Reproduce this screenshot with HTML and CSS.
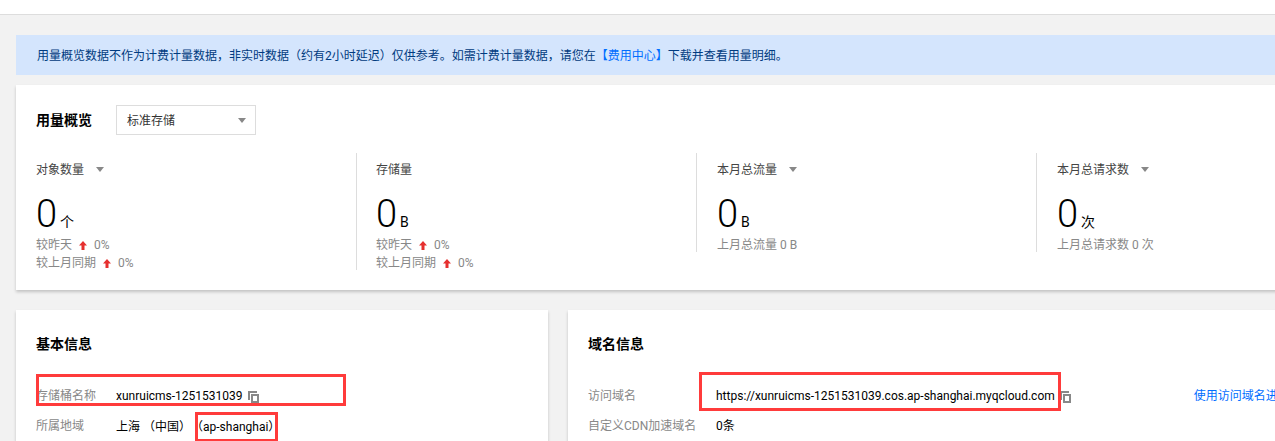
FILE: index.html
```html
<!DOCTYPE html>
<html lang="zh-CN">
<head>
<meta charset="utf-8">
<title>用量概览</title>
<link rel="stylesheet" href="styles.css">
</head>
<body>
<svg class="defs" width="0" height="0" aria-hidden="true">
  <symbol id="up" viewBox="0 0 8 9"><path d="M4 0 8 4.5H5.5V9H2.5V4.5H0Z" fill="#e6302f"/></symbol>
  <symbol id="copy" viewBox="0 0 11 12"><path d="M0 0H9V2H2V9H0Z" fill="#888"/><path fill-rule="evenodd" d="M3 3H11V12H3ZM5 5V10H9V5Z" fill="#888"/></symbol>
</svg>
<header class="topbar"></header>
<main class="content">
  <div class="notice">用量概览数据不作为计费计量数据，非实时数据<span class="paren">（</span>约有2小时延迟<span class="paren">）</span>仅供参考。如需计费计量数据，请您在<a class="link" href="#">【费用中心】</a>下载并查看用量明细。</div>

  <section class="card usage">
    <div class="usage-head">
      <h2 class="title">用量概览</h2>
      <div class="select">标准存储<i class="caret"></i></div>
    </div>
    <div class="stats">
      <div class="stat">
        <div class="stat-label">对象数量<i class="caret small"></i></div>
        <div class="stat-value"><span class="num">0</span><span class="unit">个</span></div>
        <div class="stat-sub">较昨天<svg class="up"><use href="#up"/></svg>0%</div>
        <div class="stat-sub">较上月同期<svg class="up"><use href="#up"/></svg>0%</div>
      </div>
      <div class="stat">
        <div class="stat-label">存储量</div>
        <div class="stat-value"><span class="num">0</span><span class="unit">B</span></div>
        <div class="stat-sub">较昨天<svg class="up"><use href="#up"/></svg>0%</div>
        <div class="stat-sub">较上月同期<svg class="up"><use href="#up"/></svg>0%</div>
      </div>
      <div class="stat">
        <div class="stat-label">本月总流量<i class="caret small"></i></div>
        <div class="stat-value"><span class="num">0</span><span class="unit">B</span></div>
        <div class="stat-sub">上月总流量 0 B</div>
      </div>
      <div class="stat">
        <div class="stat-label">本月总请求数<i class="caret small"></i></div>
        <div class="stat-value"><span class="num">0</span><span class="unit">次</span></div>
        <div class="stat-sub">上月总请求数 0 次</div>
      </div>
    </div>
  </section>

  <div class="info-grid">
    <section class="card info basic">
      <h2 class="title">基本信息</h2>
      <div class="row">
        <span class="key">存储桶名称</span>
        <span class="val">xunruicms-1251531039<svg class="copy"><use href="#copy"/></svg></span>
        <span class="mark mark-name"></span>
      </div>
      <div class="row">
        <span class="key">所属地域</span>
        <span class="val">上海 <span class="paren">（</span>中国<span class="paren">）</span><span class="paren">（</span>ap-shanghai<span class="paren">）</span></span>
        <span class="mark mark-region"></span>
      </div>
    </section>
    <section class="card info domain">
      <h2 class="title">域名信息</h2>
      <div class="row">
        <span class="key">访问域名</span>
        <span class="val">https://xunruicms-1251531039.cos.ap-shanghai.myqcloud.com<svg class="copy"><use href="#copy"/></svg></span>
        <a class="link row-link" href="#">使用访问域名进行访问</a>
        <span class="mark mark-domain"></span>
      </div>
      <div class="row">
        <span class="key">自定义CDN加速域名</span>
        <span class="val">0条</span>
      </div>
    </section>
  </div>
</main>
</body>
</html>
```
FILE: styles.css
```css
* { box-sizing: border-box; }
html, body { margin: 0; height: 441px; overflow: hidden; }
body {
  background: #f2f2f2;
  font-family: Roboto, "Noto Sans CJK SC", sans-serif;
  font-size: 12px;
  color: #000;
}
.defs { position: absolute; }
.paren { display: inline-block; width: 12px; text-align: center; font-family: "Noto Sans CJK KR", sans-serif; }
.topbar { height: 15px; background: #fff; border-bottom: 1px solid #ddd; }
.content {
  width: 1400px;
  padding: 20px 0 0 16px;
  display: flex;
  flex-direction: column;
  gap: 10px;
}
.notice {
  height: 40px;
  line-height: 40px;
  padding-left: 21px;
  background: #d4e5fd;
  color: #003b80;
}
.link { color: #006eff; text-decoration: none; }
.card { background: #fff; box-shadow: 0 2px 3px rgba(0, 0, 0, .2); }
.title { margin: 0; font-size: 14px; font-weight: 700; line-height: 20px; }
.usage { height: 205px; padding: 20px 0 0 20px; }
.usage-head { display: flex; align-items: center; gap: 24px; height: 30px; }
.select {
  width: 140px;
  height: 30px;
  line-height: 30px;
  padding-left: 10px;
  border: 1px solid #ddd;
  position: relative;
  color: #333;
}
.caret {
  position: absolute;
  right: 9px;
  top: 12px;
  border: 4px solid transparent;
  border-top: 5px solid #888;
  border-bottom: 0;
}
.caret.small { position: static; display: inline-block; margin-left: 12px; vertical-align: 2px; }
.stats { display: flex; align-items: flex-start; margin-top: 18px; }
.stat { width: 340px; padding-left: 20px; border-left: 1px solid #ddd; }
.stat:first-child { width: 320px; padding-left: 0; border-left: 0; }
.stat:nth-child(2) { padding-left: 19px; }
.stat-label { line-height: 34px; color: #444; }
.stat-value { display: flex; align-items: baseline; margin-top: 7px; height: 42px; line-height: 41px; }
.num { font-size: 38px; font-weight: 300; }
.unit { font-size: 14px; margin-left: 3px; }
.stat-sub { line-height: 18px; color: #888; }
.stat-sub:last-child { margin-bottom: -2px; }
.up { width: 8px; height: 9px; margin: 0 7px; vertical-align: -1px; }
.info-grid { display: flex; gap: 20px; margin-top: 10px; }
.info { height: 200px; padding: 24px 0 0 20px; }
.basic { width: 532px; }
.domain { flex: 1; }
.info .title { margin-bottom: 27px; }
.row { position: relative; display: flex; height: 30px; line-height: 30px; }
.key { color: #888; }
.basic .key { width: 80px; }
.domain .key { width: 128px; }
.val { color: #000; }
.copy { width: 11px; height: 12px; margin-left: 5px; vertical-align: -3px; }
.row-link { margin-left: 123px; }
.mark { position: absolute; border: 3px solid #ff3b3b; }
.mark-name { left: 0; top: -7px; width: 310px; height: 32px; }
.mark-region { left: 159px; top: 1px; width: 83px; height: 30px; }
.mark-domain { left: 111px; top: -9px; width: 362px; height: 39px; }
```
